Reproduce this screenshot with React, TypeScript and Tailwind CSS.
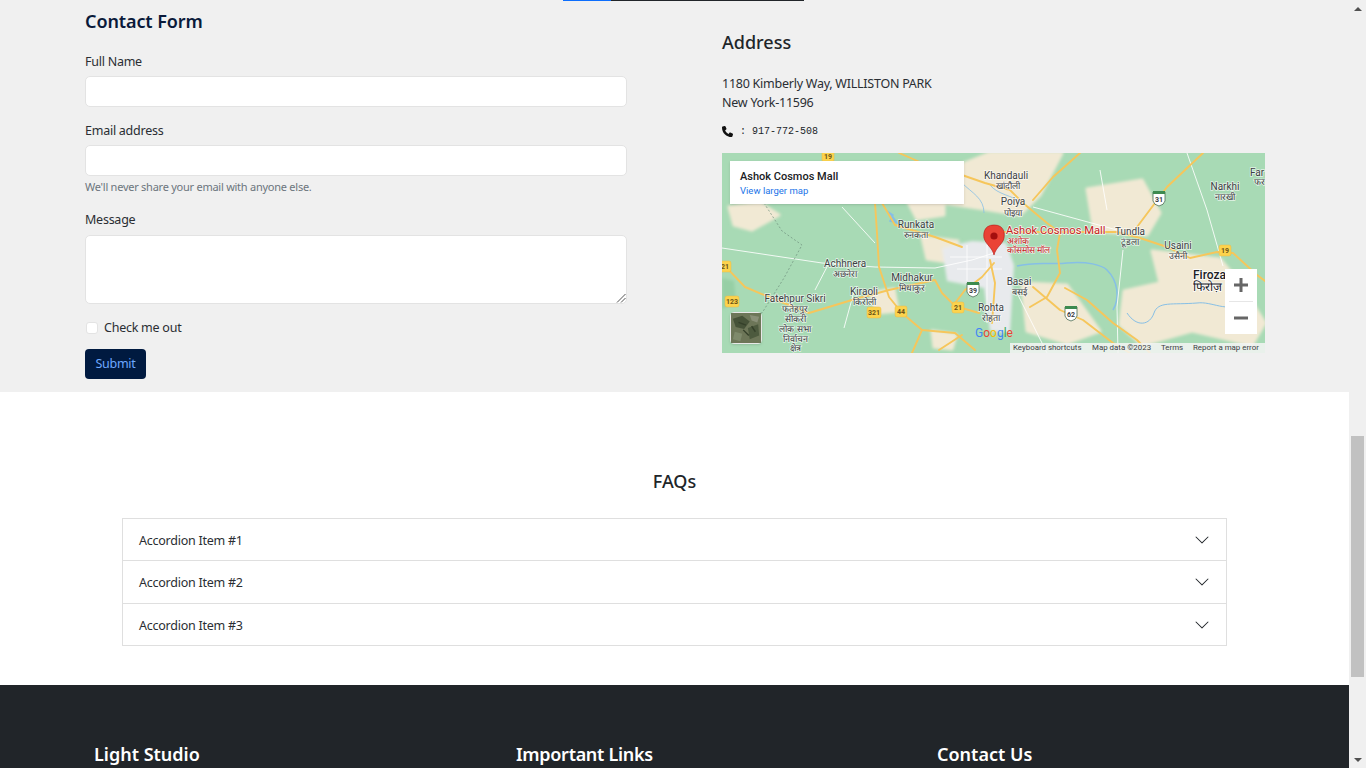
const font = "font-['Noto_Sans','Open_Sans',sans-serif]";
const body = "text-[12.5px] tracking-[-0.25px] text-[#2a2e33]";

const whiteRoads = [
  "M0 95 L100 110 L153 114 L213 115 L250 107 L272 100",
  "M120 54 L153 90",
  "M107 110 L93 137",
  "M465 0 L485 57 L501 113",
  "M378 17 L385 57",
  "M311 54 L395 77",
  "M401 97 L395 154 L396 200",
  "M295 140 L325 200",
  "M133 135 L122 175",
];

const yellowRoads = [
  "M153 50 L155 80 L157 114 L167 144 L180 160 L200 177 L233 180 L253 197",
  "M0 110 L23 134 L47 144 L87 160 L130 147 L167 137 L213 127 L220 140 L233 153 L257 160",
  "M160 50 L173 72 L213 84 L240 94",
  "M230 154 L243 137 L260 124 L272 110",
  "M177 0 L200 10 L240 22 L263 30 L288 37 L301 50 L325 70 L338 80",
  "M358 0 L331 24 L311 47",
  "M481 0 L445 34 L415 74",
  "M270 79 L395 79 L418 85 L445 94 L468 105 L495 99 L511 100 L535 122 L543 128",
  "M338 80 L335 97 L338 120 L325 144 L308 154",
  "M268 107 L273 130 L270 170",
  "M311 134 L338 157 L361 167 L391 190 L408 200",
  "M343 135 L365 147 L391 170 L415 187 L428 200",
  "M217 197 L240 182",
  "M190 200 L200 177",
];

const beige = [
  "M268 0 L340 0 L318 42 L298 62 L262 56 L222 50 L224 18 Z",
  "M177 32 L222 30 L222 62 L195 66 Z",
  "M7 54 L38 50 L57 62 L30 77 L12 72 Z",
  "M200 84 L236 88 L232 110 L205 106 Z",
  "M365 36 L420 27 L438 60 L425 82 L372 78 Z",
  "M430 98 L498 106 L518 130 L543 170 L530 192 L470 178 L420 192 L398 172 L402 138 L438 130 Z",
  "M300 130 L345 132 L378 178 L345 190 L305 178 Z",
  "M148 140 L172 136 L176 158 L155 160 Z",
  "M210 178 L234 182 L230 196 L212 194 Z",
];

const labels: [string, number, number, number?][] = [
  ["Runkata", 194, 75],
  ["रुनकता", 194, 85, 9],
  ["Achhnera", 123, 114],
  ["अछनेरा", 123, 124, 9],
  ["Midhakur", 190, 128],
  ["मिधाकुर", 190, 138, 9],
  ["Kiraoli", 142, 142],
  ["किरोली", 142, 152, 9],
  ["Fatehpur Sikri", 73, 149],
  ["फतेहपुर", 73, 159, 9],
  ["सीकरी", 73, 169, 9],
  ["लोक सभा", 73, 179, 9],
  ["निर्वाचन", 73, 189, 9],
  ["क्षेत्र", 73, 198, 9],
  ["Rohta", 269, 158],
  ["रोहता", 269, 168, 9],
  ["Khandauli", 284, 26],
  ["खांदौली", 286, 36, 9],
  ["Poiya", 291, 52],
  ["पोइया", 291, 63, 9],
  ["Basai", 297, 132],
  ["बसई", 297, 142, 9],
  ["Tundla", 408, 82],
  ["टूंडला", 408, 92, 9],
  ["Usaini", 456, 96],
  ["उसैनी", 456, 106, 9],
  ["Narkhi", 503, 37],
  ["नारखी", 503, 47, 9],
  ["Far", 535, 23],
  ["फर", 537, 32, 9],
];

const shields: [string, number, number][] = [
  ["19", 106, 4],
  ["21", 3, 114],
  ["123", 9, 149],
  ["321", 151, 160],
  ["44", 179, 159],
  ["21", 236, 155],
  ["19", 503, 98],
];

const highways: [string, number, number][] = [
  ["39", 251, 136],
  ["62", 349, 160],
  ["31", 437, 45],
];

function MapGraphic() {
  return (
    <svg viewBox="0 0 543 200" className="block w-full h-full" fontFamily="Roboto, sans-serif">
      <defs>
        <filter id="soft" x="-10%" y="-10%" width="120%" height="120%">
          <feGaussianBlur stdDeviation="1.6" />
        </filter>
      </defs>
      <rect width="543" height="200" fill="#a8dab5" />
      <g filter="url(#soft)">
        <path d="M0 125 L12 128 L14 150 L0 156 Z" fill="#96cfa5" />
        {beige.map((d) => (
          <path key={d} d={d} fill="#f1e9d4" stroke="#f1e9d4" strokeWidth="3" strokeLinejoin="round" />
        ))}
        <path d="M220 95 L250 88 L284 90 L292 112 L288 180 L268 178 L262 135 L225 128 Z" fill="#e8eaed" />
      </g>
      <path d="M228 104 H280 M235 116 H280 M245 92 V128 M265 92 V170" fill="none" stroke="#ffffff" strokeWidth="0.8" />
      <path d="M295 113 C315 108 330 112 345 110 C365 108 380 112 385 117 C396 128 398 145 391 157" fill="none" stroke="#86bfe6" strokeWidth="1.5" />
      <path d="M405 160 C415 175 428 172 432 160 C436 148 450 152 475 150 C490 148 505 160 520 150" fill="none" stroke="#86bfe6" strokeWidth="1" />
      <path d="M240 30 C250 40 262 45 262 60 M268 32 C276 42 290 42 300 50" fill="none" stroke="#86bfe6" strokeWidth="0.8" />
      <path d="M165 58 L171 62 L168 68 L175 70 L171 64 Z" fill="#86bfe6" stroke="#86bfe6" strokeWidth="1.5" />
      {whiteRoads.map((d) => (
        <path key={d} d={d} fill="none" stroke="#ffffff" strokeOpacity="0.85" strokeWidth="1" />
      ))}
      <path d="M42 50 L60 78 L80 92 L62 125 L40 160 L20 160" fill="none" stroke="#6f8f7c" strokeWidth="0.7" strokeDasharray="2 2" />
      {yellowRoads.map((d) => (
        <path key={d} d={d} fill="none" stroke="#f6c65b" strokeWidth="1.9" strokeLinejoin="round" strokeLinecap="round" />
      ))}
      {shields.map(([n, x, y]) => (
        <g key={`${n}-${x}`}>
          <rect x={x - 6} y={y - 6} width={n.length > 2 ? 14 : 12} height="11" rx="2" fill="#fcd34d" stroke="#e9b949" strokeWidth="0.5" />
          <text x={x + (n.length > 2 ? 1 : 0)} y={y + 2} textAnchor="middle" fontSize="7" fontWeight="700" fill="#6b5518">{n}</text>
        </g>
      ))}
      {highways.map(([n, x, y]) => (
        <g key={n}>
          <path d={`M${x - 6} ${y - 6} h12 v9 q-1 4 -6 5 q-5 -1 -6 -5 Z`} fill="#ffffff" stroke="#4a6b52" strokeWidth="0.8" />
          <rect x={x - 6} y={y - 7} width="12" height="3" fill="#3d8a4f" />
          <text x={x} y={y + 4} textAnchor="middle" fontSize="7" fontWeight="700" fill="#3c4043">{n}</text>
        </g>
      ))}
      {labels.map(([t, x, y, s]) => (
        <text key={t + x} x={x} y={y} textAnchor="middle" fontSize={s ?? 10} fill="#3c4043" stroke="#ffffff" strokeWidth="1.5" strokeOpacity="0.7" paintOrder="stroke">
          {t}
        </text>
      ))}
      <text x="471" y="126" fontSize="12" fontWeight="500" fill="#202124" stroke="#fff" strokeWidth="1.5" paintOrder="stroke">Firoza</text>
      <text x="471" y="138" fontSize="12" fontWeight="500" fill="#202124" stroke="#fff" strokeWidth="1.5" paintOrder="stroke">फिरोज़</text>
      <text x="284" y="81" fontSize="11.2" fill="#c5221f" stroke="#fff" strokeWidth="1.5" strokeOpacity="0.8" paintOrder="stroke">Ashok Cosmos Mall</text>
      <text x="285" y="91" fontSize="9" fill="#c5221f" stroke="#fff" strokeWidth="1.2" strokeOpacity="0.8" paintOrder="stroke">अशोक</text>
      <text x="285" y="100" fontSize="9" fill="#c5221f" stroke="#fff" strokeWidth="1.2" strokeOpacity="0.8" paintOrder="stroke">कॉसमोस मॉल</text>
      <path d="M272 72 C261 72 261.5 82 262 85 C264 92 270 94 272 102 C274 94 281 91 282 85 C283 80 282 72 272 72 Z" fill="#ea4335" stroke="#b31412" strokeWidth="0.6" />
      <circle cx="272" cy="83" r="3.6" fill="#a50e0e" />
      <text x="253" y="184" fontSize="12">
        <tspan fill="#4285f4">G</tspan>
        <tspan fill="#ea4335">o</tspan>
        <tspan fill="#fbbc05">o</tspan>
        <tspan fill="#4285f4">g</tspan>
        <tspan fill="#34a853">l</tspan>
        <tspan fill="#ea4335">e</tspan>
      </text>
      <rect x="288" y="190" width="255" height="10" fill="#f5f5f5" fillOpacity="0.85" />
      <text fontSize="7.9" fill="#3c4043" y="197">
        <tspan x="291">Keyboard shortcuts</tspan>
        <tspan x="370">Map data ©2023</tspan>
        <tspan x="439">Terms</tspan>
        <tspan x="471">Report a map error</tspan>
      </text>
    </svg>
  );
}

function SatelliteThumb() {
  return (
    <svg viewBox="0 0 32 32" className="block h-full w-full">
      <rect width="32" height="32" fill="#6d7658" />
      <path d="M2 6 L12 3 L20 9 L14 17 L5 15 Z" fill="#465238" />
      <path d="M18 16 L29 12 L30 24 L20 28 Z" fill="#4d5a3e" />
      <path d="M4 20 L12 22 L10 30 L2 28 Z" fill="#7f8a6c" />
      <path d="M20 2 L30 4 L28 10 L22 8 Z" fill="#8a9078" />
      <path d="M13 18 L19 24 M8 10 L16 13 M22 14 L26 20" stroke="#35402a" strokeWidth="1.5" />
    </svg>
  );
}

function GoogleMap() {
  return (
    <div className="relative h-[200px] w-[543px] overflow-hidden">
      <MapGraphic />
      <div className="absolute left-2 top-2 h-[43px] w-[234px] bg-white pl-[10px] pt-[9px] font-['Roboto',sans-serif] shadow-sm">
        <div className="text-[11px] font-medium leading-[14px] text-[#202124]">Ashok Cosmos Mall</div>
        <div className="text-[9.5px] leading-[14px] text-[#1a73e8]">View larger map</div>
      </div>
      <div className="absolute bottom-[9px] left-2 h-8 w-8 rounded-sm border border-[#e8e8e8] shadow-sm">
        <SatelliteThumb />
      </div>
      <div className="absolute left-[503px] top-[116px] flex h-[65px] w-8 flex-col items-center bg-white">
        <svg viewBox="0 0 16 16" className="mt-2 h-4 w-4">
          <path d="M1 8h14M8 1v14" stroke="#666666" strokeWidth="3" />
        </svg>
        <div className="mt-2 h-px w-6 bg-[#e6e6e6]" />
        <svg viewBox="0 0 16 16" className="mt-2 h-4 w-4">
          <path d="M1 8h14" stroke="#666666" strokeWidth="3" />
        </svg>
      </div>
    </div>
  );
}

function Field({ label, help }: { label: string; help?: string }) {
  return (
    <div className="mb-[13px]">
      <label className={`mb-1 block leading-[21px] ${body}`}>{label}</label>
      <div className="h-[31px] rounded-[5px] border border-[#e3e3e3] bg-white" />
      {help && <div className="mt-[2px] text-[11px] leading-[18px] tracking-[-0.25px] text-[#6c757d]">{help}</div>}
    </div>
  );
}

function AccordionRow({ title, className }: { title: string; className: string }) {
  return (
    <div className={`flex items-center justify-between px-4 ${className}`}>
      <span className={`mt-[3px] ${body}`}>{title}</span>
      <svg viewBox="0 0 16 16" className="h-4 w-4" fill="#212529">
        <path fillRule="evenodd" d="M1.646 4.646a.5.5 0 0 1 .708 0L8 10.293l5.646-5.647a.5.5 0 0 1 .708.708l-6 6a.5.5 0 0 1-.708 0l-6-6a.5.5 0 0 1 0-.708z" />
      </svg>
    </div>
  );
}

export default function App() {
  return (
    <div className={`flex h-[768px] overflow-hidden bg-white ${font}`}>
      <div className="w-[1349px] shrink-0">
        <section className="h-[392px] bg-[#f0f0f0]">
          <div className="ml-[563px] flex h-px w-[241px]">
            <div className="w-12 bg-[#0d6efd]" />
            <div className="flex-1 bg-[#212529]" />
          </div>
          <div className="flex pl-[85px]">
            <div className="w-[542px]">
              <h2 className="mb-4 pt-[6px] text-[18px] font-semibold leading-7 tracking-[-0.1px] text-[#0a1a3a]">Contact Form</h2>
              <Field label="Full Name" />
              <Field label="Email address" help="We'll never share your email with anyone else." />
              <label className={`mb-[5px] block leading-[21px] ${body}`}>Message</label>
              <div className="relative h-[69px] rounded-[5px] border border-[#e3e3e3] bg-white">
                <svg viewBox="0 0 10 10" className="absolute bottom-0 right-0 h-[10px] w-[10px]" stroke="#555555" strokeWidth="1">
                  <path d="M1 9.5 9.5 1M5 9.5 9.5 5" />
                </svg>
              </div>
              <div className="mt-[13px] flex items-center gap-[6px] pl-px">
                <div className="h-3 w-3 rounded-[3px] border border-[#e3e3e3] bg-white" />
                <span className={`leading-[21px] ${body}`}>Check me out</span>
              </div>
              <button className="mt-[11px] h-[30px] w-[61px] rounded-[4px] bg-[#001a40] text-[12.5px] tracking-[-0.25px] text-[#6ea8fe]">Submit</button>
            </div>
            <div className="ml-[95px] w-[543px] pt-[27px]">
              <h3 className="mb-[18px] text-[18px] font-medium leading-7 text-[#212529]">Address</h3>
              <p className={`leading-[19px] ${body}`}>1180 Kimberly Way, WILLISTON PARK</p>
              <p className={`leading-[19px] ${body}`}>New York-11596</p>
              <div className="mt-[9px] mb-3 flex h-5 items-center gap-[7px]">
                <svg viewBox="0 0 512 512" className="h-[11px] w-[11px]" fill="#111111">
                  <path d="M164.9 24.6c-7.7-18.6-28-28.5-47.4-23.2l-88 24C12.1 30.2 0 46 0 64c0 247.4 200.6 448 448 448 18 0 33.8-12.1 38.6-29.5l24-88c5.3-19.4-4.6-39.7-23.2-47.4l-96-40c-16.3-6.8-35.2-2.1-46.3 11.6L304.7 368C234.3 334.7 177.3 277.7 144 207.3L193.3 167c13.7-11.2 18.4-30 11.6-46.3l-40-96z" />
                </svg>
                <span className="font-['Liberation_Mono',monospace] text-[10px] text-[#212529]">: 917-772-508</span>
              </div>
              <GoogleMap />
            </div>
          </div>
        </section>

        <section className="h-[293px] bg-white pt-[75px]">
          <h2 className="mb-[23px] text-center text-[18px] font-medium leading-7 text-[#212529]">FAQs</h2>
          <div className="mx-[122px] w-[1105px] border border-[#dfdfdf]">
            <AccordionRow title="Accordion Item #1" className="h-[42px] border-b border-[#dfdfdf]" />
            <AccordionRow title="Accordion Item #2" className="h-[43px] border-b border-[#dfdfdf]" />
            <AccordionRow title="Accordion Item #3" className="h-[41px]" />
          </div>
        </section>

        <footer className="h-[83px] bg-[#212529] pl-[94px] pt-[55px]">
          <div className="grid grid-cols-[422px_421px_1fr] text-[18px] font-semibold leading-7 text-white">
            <div>Light Studio</div>
            <div className="tracking-[-0.3px]">Important Links</div>
            <div>Contact Us</div>
          </div>
        </footer>
      </div>

      <div className="flex w-[17px] shrink-0 flex-col items-center bg-[#f0f0f0]">
        <div className="mt-[7px] h-0 w-0 border-x-4 border-b-4 border-x-transparent border-b-[#505050]" />
        <div className="mt-[425px] h-[241px] w-[13px] bg-[#c1c1c1]" />
        <div className="mt-[81px] h-0 w-0 border-x-4 border-t-4 border-x-transparent border-t-[#505050]" />
      </div>
    </div>
  );
}
